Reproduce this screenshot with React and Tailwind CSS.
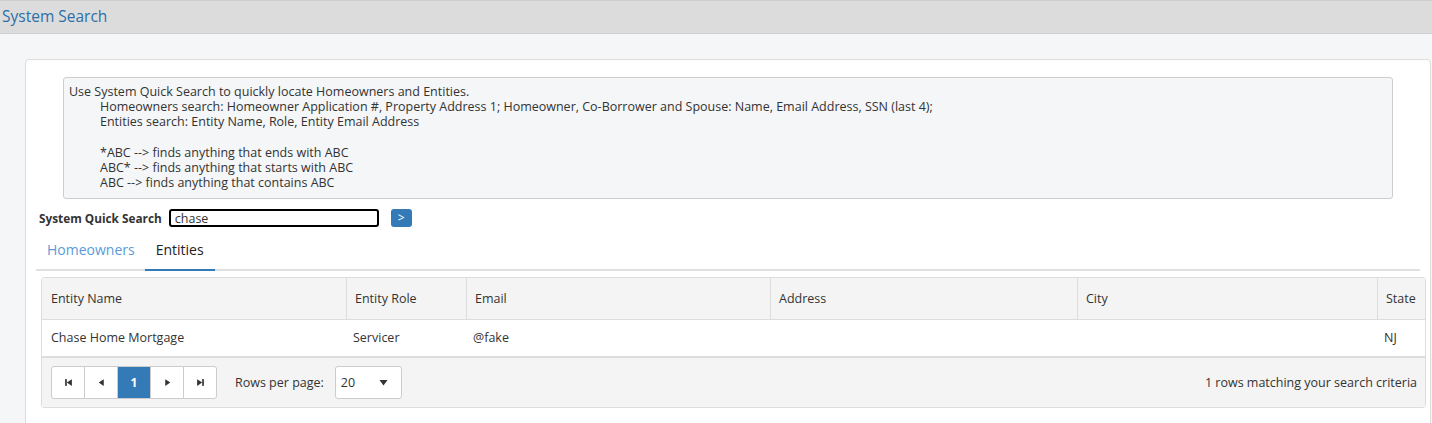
const columns = [
    { key: "name", label: "Entity Name" },
    { key: "role", label: "Entity Role" },
    { key: "email", label: "Email" },
    { key: "address", label: "Address" },
    { key: "city", label: "City" },
    { key: "state", label: "State" },
];

const rows = [
    { name: "Chase Home Mortgage", role: "Servicer", email: "@fake", address: "", city: "", state: "NJ" },
];

function PagerButton({ children, active, first, last }) {
    return (
        <button
            type="button"
            className={
                "flex h-[33px] w-[34px] items-center justify-center border border-[#ccc] text-[12px] " +
                (active ? "border-[#337ab7] bg-[#337ab7] font-bold text-white " : "bg-white text-[#333] ") +
                (first ? "rounded-l-[3px] " : "-ml-px ") +
                (last ? "rounded-r-[3px]" : "")
            }
        >
            {children}
        </button>
    );
}

export default function App() {
    return (
        <div className="min-h-[423px] bg-[#f5f6f7] font-['Open_Sans',sans-serif] text-[12.5px] text-[#333]">
            <div className="flex h-[34px] items-center border-y border-[#cfcfcf] bg-[#dcdcdc] pl-[2px]">
                <h1 className="text-[15.5px] text-[#2c6fa8]">System Search</h1>
            </div>

            <div className="ml-[25px] mr-px mt-[25px] rounded-[4px] border border-[#dcdcdc] bg-white pb-[20px] pt-[17px]">
                <div className="mx-[37px] rounded-[3px] border border-[#cdcdcd] bg-[#f5f6f8] pb-[8px] pl-[5px] pr-[5px] pt-[6px] leading-[15.2px]">
                    <p>Use System Quick Search to quickly locate Homeowners and Entities.</p>
                    <div className="pl-[31px]">
                        <p>Homeowners search: Homeowner Application #, Property Address 1; Homeowner, Co-Borrower and Spouse: Name, Email Address, SSN (last 4);</p>
                        <p>Entities search: Entity Name, Role, Entity Email Address</p>
                        <p className="mt-[15.2px]">*ABC --&gt; finds anything that ends with ABC</p>
                        <p>ABC* --&gt; finds anything that starts with ABC</p>
                        <p>ABC --&gt; finds anything that contains ABC</p>
                    </div>
                </div>

                <div className="ml-[13px] mt-[10px] flex items-center">
                    <label htmlFor="quick-search" className="text-[11.8px] font-bold text-[#333]">
                        System Quick Search
                    </label>
                    <input
                        id="quick-search"
                        defaultValue="chase"
                        className="ml-[7px] h-[18px] w-[210px] rounded-[3px] border-2 border-black px-[4px] text-[12.5px] leading-none outline-none"
                    />
                    <button
                        type="button"
                        className="ml-[12px] flex h-[18px] w-[21px] items-center justify-center rounded-[3px] bg-[#337ab7] text-[12px] text-white"
                    >
                        &gt;
                    </button>
                </div>

                <div className="mx-[10px] mt-[6px] flex border-b-2 border-[#e0e0e0] pl-[10px] text-[14px]">
                    <div className="px-[1px] pb-[9px] pt-[6px] text-[#5a9bd8]">Homeowners</div>
                    <div className="-mb-[2px] ml-[9px] border-b-2 border-[#337ab7] px-[11px] pb-[9px] pt-[6px] text-[#222]">
                        Entities
                    </div>
                </div>

                <div className="ml-[15px] mr-[4px] mt-[6px] rounded-[3px] border border-[#ddd]">
                    <div className="grid grid-cols-[304px_120px_304px_307px_300px_1fr] border-b border-[#ddd] bg-[#f4f4f4]">
                        {columns.map((column, index) => (
                            <div
                                key={column.key}
                                className={
                                    "flex h-[41px] items-center px-[8px] " +
                                    (index > 0 ? "border-l border-[#ddd]" : "pl-[9px]")
                                }
                            >
                                {column.label}
                            </div>
                        ))}
                    </div>
                    {rows.map((row) => (
                        <div key={row.name} className="grid grid-cols-[304px_120px_304px_307px_300px_1fr] bg-white">
                            {columns.map((column, index) => (
                                <div
                                    key={column.key}
                                    className={"flex h-[36px] items-center px-[8px] " + (index > 0 ? "pl-[7px]" : "pl-[9px]")}
                                >
                                    {row[column.key]}
                                </div>
                            ))}
                        </div>
                    ))}
                    <div className="flex h-[51px] items-center border-t-2 border-[#ddd] bg-[#f4f4f4] pl-[9px] pr-[8px]">
                        <div className="flex">
                            <PagerButton first>
                                <svg width="9" height="9" viewBox="0 0 8 8" fill="#333">
                                    <rect x="1" y="1" width="1.5" height="6" />
                                    <path d="M7 1 L2.5 4 L7 7 Z" />
                                </svg>
                            </PagerButton>
                            <PagerButton>
                                <svg width="9" height="9" viewBox="0 0 8 8" fill="#333">
                                    <path d="M6 1 L1.5 4 L6 7 Z" />
                                </svg>
                            </PagerButton>
                            <PagerButton active>1</PagerButton>
                            <PagerButton>
                                <svg width="9" height="9" viewBox="0 0 8 8" fill="#333">
                                    <path d="M2 1 L6.5 4 L2 7 Z" />
                                </svg>
                            </PagerButton>
                            <PagerButton last>
                                <svg width="9" height="9" viewBox="0 0 8 8" fill="#333">
                                    <path d="M1 1 L5.5 4 L1 7 Z" />
                                    <rect x="5.5" y="1" width="1.5" height="6" />
                                </svg>
                            </PagerButton>
                        </div>
                        <span className="ml-[18px]">Rows per page:</span>
                        <div className="ml-[11px] flex h-[33px] w-[67px] items-center justify-between rounded-[3px] border border-[#ccc] bg-white pl-[5px] pr-[13px]">
                            <span>20</span>
                            <svg width="9" height="7" viewBox="0 0 9 7" fill="#333">
                                <path d="M0.5 1 L8.5 1 L4.5 6.5 Z" />
                            </svg>
                        </div>
                        <span className="ml-auto">1 rows matching your search criteria</span>
                    </div>
                </div>
            </div>
        </div>
    );
}
